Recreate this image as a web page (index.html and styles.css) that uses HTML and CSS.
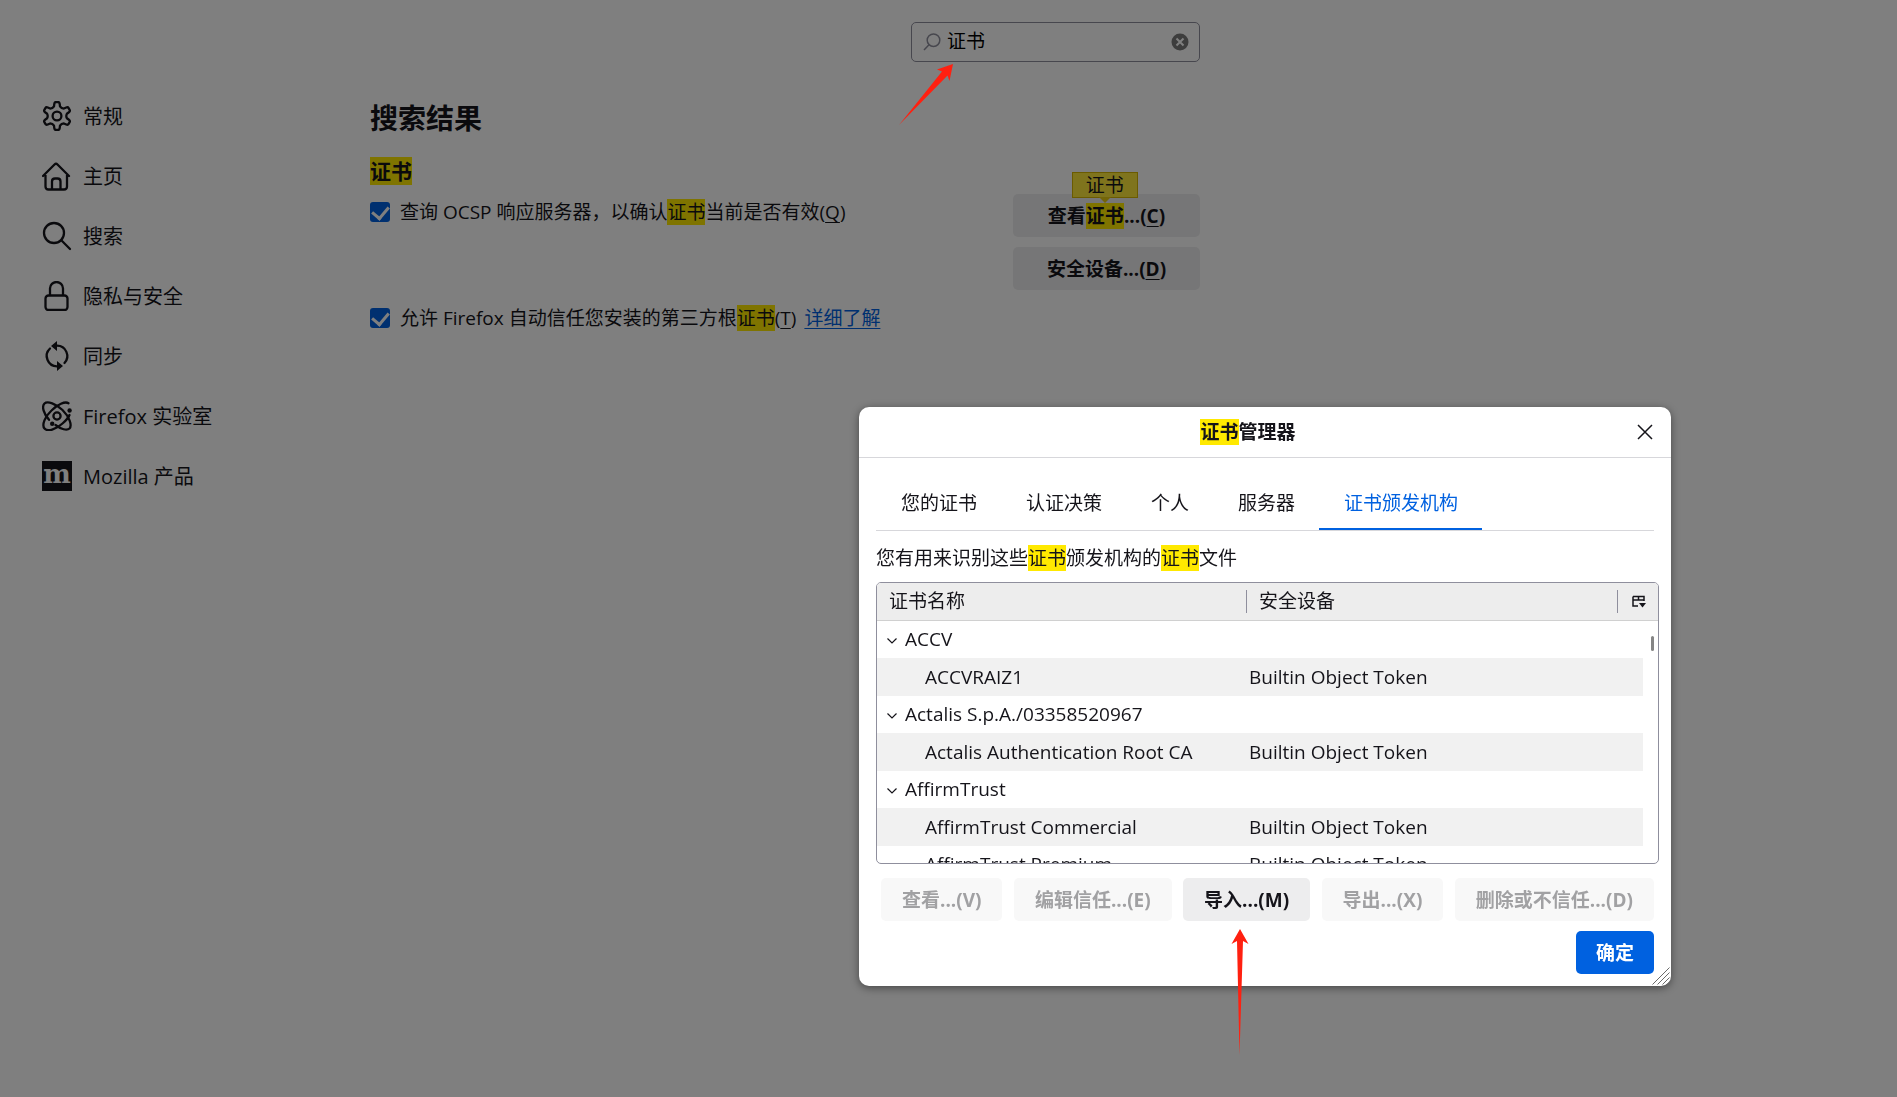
FILE: index.html
```html
<!DOCTYPE html>
<html lang="zh-CN">
<head>
    <meta charset="UTF-8">
    <meta name="viewport" content="width=device-width, initial-scale=1.0">
    <title>设置</title>
    <link rel="stylesheet" href="styles.css">
</head>
<body>

<div class="page">
    <nav class="sidebar">
        <a href="#general">
            <svg class="icon" viewBox="-15 -15 30 30"><path d="M-3-9.7L-2.7-12.2Q-2.5-14-1-14L1-14Q2.5-14 2.7-12.2L3-9.7Q4.35-7.55 6.9-7.45L9.22-8.44Q10.87-9.17 11.62-7.87L12.62-6.13Q13.37-4.83 11.92-3.76L9.9-2.25Q8.72 0 9.9 2.25L11.92 3.76Q13.37 4.83 12.62 6.13L11.62 7.87Q10.87 9.17 9.22 8.44L6.9 7.45Q4.35 7.55 3 9.7L2.7 12.2Q2.5 14 1 14L-1 14Q-2.5 14-2.7 12.2L-3 9.7Q-4.35 7.55-6.9 7.45L-9.22 8.44Q-10.87 9.17-11.62 7.87L-12.62 6.13Q-13.37 4.83-11.92 3.76L-9.9 2.25Q-8.72 0-9.9-2.25L-11.92-3.76Q-13.37-4.83-12.62-6.13L-11.62-7.87Q-10.87-9.17-9.22-8.44L-6.9-7.45Q-4.35-7.55-3-9.7Z"/><circle r="4.4"/></svg>
            <span>常规</span>
        </a>
        <a href="#home">
            <svg class="icon" viewBox="0 0 30 30"><path d="M1 15L12.500 3.500Q14 2 15.500 3.500L27 15M3.500 14V25.500Q3.500 28.500 6.500 28.500H22Q25 28.500 25 25.500V14M10 28V20.500Q10 17.500 13 17.500H15.500Q18.500 17.500 18.500 20.500V28"/></svg>
            <span>主页</span>
        </a>
        <a href="#search">
            <svg class="icon" viewBox="0 0 30 30"><circle cx="12" cy="12" r="10"/><path d="M19.300 19.300L28 28"/></svg>
            <span>搜索</span>
        </a>
        <a href="#privacy">
            <svg class="icon" viewBox="0 0 30 30"><rect x="3.500" y="14.500" width="22" height="14.500" rx="3"/><path d="M8 14V7.500A6.500 6.500 0 0 1 21 7.500V14"/></svg>
            <span>隐私与安全</span>
        </a>
        <a href="#sync">
            <svg class="icon" viewBox="-15 -15 30 30"><path d="M-7-7.500A10.300 10.300 0 0 0 0 10.300M0-10.300A10.300 10.300 0 0 1 7.500 7"/><path class="solid" d="M0 5L6 10L0 15ZM0-15L-6-10L0-5Z"/></svg>
            <span>同步</span>
        </a>
        <a href="#experimental">
            <svg class="icon" viewBox="-15 -15 30 30"><path d="M12.500-1C11.500 1.500 9 4.500 5.500 7.500C-1 13.500-9.500 16-12.500 12.500C-15.500 9-12 0.500-5.500-5.500C0.500-11.500 8-15 11.500-12.800"/><path d="M-8 3.800C-13.500-2.500-15.500-9.500-12.500-12.500C-9.500-15.500-1-12 5.500-6C12 0.500 15.500 9 12.500 12.500C10 15 4 13.200-1.500 9"/><circle r="3.600"/><circle class="solid" cx="12.600" cy="-5.500" r="2.200"/><circle class="solid" cx="-4.800" cy="7.800" r="2.200"/></svg>
            <span>Firefox 实验室</span>
        </a>
        <a href="#more">
            <svg class="mozilla" viewBox="0 0 30 30"><rect width="30" height="30"/><text x="15" y="22" text-anchor="middle">m</text></svg>
            <span>Mozilla 产品</span>
        </a>
    </nav>

    <main class="content">
        <label class="search">
            <svg viewBox="0 0 18 18"><circle cx="10.500" cy="7.200" r="6.300"/><path d="M6 11.700L1 17"/></svg>
            <input type="text" value="证书" aria-label="在设置中查找">
            <button class="clear" aria-label="清除">
                <svg viewBox="0 0 18 18"><circle cx="9" cy="9" r="8.500"/><path d="M5.500 5.500L12.500 12.500M12.500 5.500L5.500 12.500"/></svg>
            </button>
        </label>

        <h1>搜索结果</h1>
        <h2><mark>证书</mark></h2>

        <div class="group">
            <div class="options">
                <div class="option">
                    <input type="checkbox" id="ocsp" checked>
                    <label for="ocsp">查询 OCSP 响应服务器，以确认<mark>证书</mark>当前是否有效(<u>Q</u>)</label>
                </div>
                <div class="option">
                    <input type="checkbox" id="thirdparty" checked>
                    <label for="thirdparty">允许 Firefox 自动信任您安装的第三方根<mark>证书</mark>(<u>T</u>)</label>
                    <a href="#learn">详细了解</a>
                </div>
            </div>
            <div class="actions">
                <button class="btn">查看<mark>证书<span class="tip">证书</span></mark>...(<u>C</u>)</button>
                <button class="btn">安全设备...(<u>D</u>)</button>
            </div>
        </div>
    </main>
</div>

<div class="overlay"></div>

<div class="dialog" role="dialog" aria-labelledby="dialogTitle">
    <div class="title-bar">
        <div class="title" id="dialogTitle"><mark>证书</mark>管理器</div>
        <button class="close" aria-label="关闭">
            <svg viewBox="0 0 16 16"><path d="M1 1L15 15M15 1L1 15"/></svg>
        </button>
    </div>

    <div class="dialog-body">
        <div class="tabs" role="tablist">
            <button role="tab">您的证书</button>
            <button role="tab">认证决策</button>
            <button role="tab">个人</button>
            <button role="tab">服务器</button>
            <button role="tab" class="selected">证书颁发机构</button>
        </div>

        <p class="description">您有用来识别这些<mark>证书</mark>颁发机构的<mark>证书</mark>文件</p>

        <div class="tree">
            <table class="tree-head">
                <tr>
                    <th class="name"><span>证书名称</span></th>
                    <th><span>安全设备</span></th>
                    <th class="picker">
                        <button aria-label="选择要显示的列">
                            <svg viewBox="0 0 14 14"><path d="M1 2.500H12V7M1 2.500V12H6M1 6H12M6.500 2.500V6"/><path class="solid" d="M7 9H14L10.500 13.500Z"/></svg>
                        </button>
                    </th>
                </tr>
            </table>
            <div class="tree-body">
                <table>
                    <tr class="parent"><td class="name"><svg viewBox="0 0 10 6"><path d="M0.500 0.500L5 5L9.500 0.500"/></svg>ACCV</td><td></td></tr>
                    <tr class="child"><td class="name">ACCVRAIZ1</td><td>Builtin Object Token</td></tr>
                    <tr class="parent"><td class="name"><svg viewBox="0 0 10 6"><path d="M0.500 0.500L5 5L9.500 0.500"/></svg>Actalis S.p.A./03358520967</td><td></td></tr>
                    <tr class="child"><td class="name">Actalis Authentication Root CA</td><td>Builtin Object Token</td></tr>
                    <tr class="parent"><td class="name"><svg viewBox="0 0 10 6"><path d="M0.500 0.500L5 5L9.500 0.500"/></svg>AffirmTrust</td><td></td></tr>
                    <tr class="child"><td class="name">AffirmTrust Commercial</td><td>Builtin Object Token</td></tr>
                    <tr class="child even"><td class="name">AffirmTrust Premium</td><td>Builtin Object Token</td></tr>
                </table>
                <div class="thumb"></div>
            </div>
        </div>

        <div class="buttons">
            <button class="btn" disabled>查看...(V)</button>
            <button class="btn" disabled>编辑信任...(E)</button>
            <button class="btn">导入...(M)</button>
            <button class="btn" disabled>导出...(X)</button>
            <button class="btn" disabled>删除或不信任...(D)</button>
        </div>
        <div class="buttons end">
            <button class="btn primary">确定</button>
        </div>
    </div>
    <svg class="grip" viewBox="0 0 18 18"><path d="M0.500 17.500L17.500 0.500M5.500 17.500L17.500 5.500M10.500 17.500L17.500 10.500M15 17.500L17.500 15"/></svg>
</div>

<!-- arrows -->
<svg class="arrow arrow-search" viewBox="0 0 56 62"><path d="M54 0L50.500 17L48.500 11.500L0 61L43 7.500L38 5.500Z"/></svg>
<svg class="arrow arrow-import" viewBox="0 0 18 126"><path d="M9 0L17.500 15L12 12L8.500 126L6 12L0.500 15Z"/></svg>

</body>
</html>
```
FILE: styles.css
```css
* {
    box-sizing: border-box;
}
body {
    margin: 0;
    min-height: 100vh;
    background: #fff;
    color: #15141a;
    font-family: "Open Sans", "Noto Sans CJK SC", sans-serif;
    font-size: 19px;
    line-height: 26px;
    overflow: hidden;
}
button, input {
    font: inherit;
    color: inherit;
}
button {
    border: none;
    background: none;
    padding: 0;
}
svg {
    display: block;
    fill: none;
    stroke: currentColor;
}
.solid {
    fill: currentColor;
    stroke: none;
}
mark {
    background: #ffe900;
    color: inherit;
}
u {
    text-underline-offset: 3px;
}

/* page */
.page {
    display: flex;
}
.sidebar {
    width: 370px;
    padding: 86px 0 0 42px;
    font-size: 20px;
}
.sidebar a {
    display: flex;
    align-items: center;
    gap: 11px;
    height: 60px;
    color: inherit;
    text-decoration: none;
}
.sidebar span {
    padding-top: 1px;
}
.icon, .mozilla {
    width: 30px;
    height: 30px;
    stroke-width: 2.3;
    stroke-linecap: round;
    stroke-linejoin: round;
}
.mozilla {
    fill: #15141a;
    stroke: none;
}
.mozilla text {
    fill: #fff;
    font: bold 26px "DejaVu Serif", serif;
}
.content {
    width: 830px;
    padding-top: 22px;
}
.search {
    display: flex;
    align-items: center;
    width: 289px;
    height: 40px;
    margin-left: auto;
    padding: 0 10px 0 11px;
    border: 1px solid #8f8f9d;
    border-radius: 5px;
}
.search svg {
    width: 18px;
    height: 18px;
    stroke: #8f8f9d;
    stroke-width: 1.5;
}
.search input {
    flex: 1;
    min-width: 0;
    border: none;
    outline: none;
    padding: 0 6px 2px;
    background: none;
    color: #000;
}
.clear circle {
    fill: #7a7a7a;
    stroke: none;
}
.search .clear path {
    stroke: #fff;
    stroke-width: 2;
}
h1 {
    margin: 36px 0 0;
    font-size: 28px;
    line-height: 40px;
}
h2 {
    margin: 18px 0 0;
    font-size: 21px;
    line-height: 30px;
}
.group {
    display: flex;
    justify-content: space-between;
    padding-top: 8px;
}
.options {
    display: flex;
    flex-direction: column;
    gap: 80px;
    padding-top: 5px;
}
.option {
    display: flex;
    align-items: center;
}
.option input {
    appearance: none;
    display: grid;
    place-content: center;
    width: 20px;
    height: 20px;
    margin: 0 10px 0 0;
    border-radius: 3px;
    background: #0061e0;
}
.option input:checked::before {
    content: "";
    width: 8px;
    height: 13px;
    margin-bottom: 3px;
    border: solid #fff;
    border-width: 0 3px 3px 0;
    transform: rotate(40deg);
}
.option a {
    margin-left: 8px;
    color: #0061e0;
    text-underline-offset: 3px;
}
.actions {
    display: flex;
    flex-direction: column;
    gap: 10px;
    width: 187px;
}
.btn {
    height: 43px;
    padding: 0 21px;
    border-radius: 5px;
    background: #ededee;
    font-weight: bold;
    white-space: nowrap;
}
.btn:disabled {
    background: #f8f8f8;
    color: #a1a1a3;
}
.btn mark {
    position: relative;
}
.tip {
    position: absolute;
    left: 50%;
    bottom: 31px;
    width: 66px;
    margin-left: -33px;
    border: 1px solid #d7b600;
    background: #ffe93a;
    line-height: 24px;
    font-weight: normal;
    text-align: center;
}
.tip::after {
    content: "";
    position: absolute;
    left: 26px;
    top: 24px;
    border: 6px solid transparent;
    border-top-color: #e8cd10;
}

/* dialog */
.overlay {
    position: fixed;
    inset: 0;
    background: rgba(0, 0, 0, 0.5);
}
.dialog {
    position: absolute;
    top: 407px;
    right: 226px;
    width: 812px;
    border-radius: 10px;
    background: #fff;
    box-shadow: 0 2px 8px rgba(0, 0, 0, 0.45);
}
.title-bar {
    display: flex;
    align-items: center;
    height: 51px;
    padding: 0 18px;
    border-bottom: 1px solid #d7d7db;
}
.title {
    flex: 1;
    padding-right: 18px;
    text-align: center;
    font-weight: bold;
}
.close svg {
    width: 16px;
    height: 16px;
    stroke-width: 1.5;
}
.dialog-body {
    padding: 17px 12px 12px 17px;
}
.tabs {
    display: flex;
    margin-right: 5px;
    border-bottom: 1px solid #d7d7db;
}
.tabs button {
    height: 55px;
    padding: 2px 24px 0 25px;
    border-bottom: 2px solid transparent;
}
.tabs .selected {
    color: #0061e0;
    border-color: #0061e0;
}
.description {
    margin: 14px 0 11px;
}
.tree {
    border: 1px solid #8f8f9d;
    border-radius: 5px;
    overflow: hidden;
}
table {
    width: 100%;
    border-collapse: collapse;
    table-layout: fixed;
}
th, td {
    padding: 0;
    text-align: left;
    font-weight: normal;
    white-space: nowrap;
}
.name {
    width: 370px;
}
.tree-head {
    background: #ededed;
    border-bottom: 1px solid #d0d0d0;
}
.tree-head th {
    height: 37px;
}
.tree-head span {
    display: block;
    padding-left: 12px;
    border-right: 1px solid #8f8f9d;
    line-height: 23px;
}
.picker {
    width: 40px;
}
.picker svg {
    width: 14px;
    height: 14px;
    margin-left: 14px;
    stroke-width: 1.5;
}
.tree-body {
    position: relative;
    height: 242px;
    padding-right: 15px;
    overflow: hidden;
}
.tree-body td + td {
    padding-left: 2px;
}
.parent td {
    height: 37px;
}
.parent svg {
    display: inline-block;
    width: 10px;
    height: 6px;
    margin: 0 8px 2px 10px;
    stroke-width: 1.2;
}
.child td {
    height: 38px;
    background: #f1f1f1;
}
.child .name {
    padding-left: 48px;
}
.even td {
    height: 37px;
    background: none;
}
.thumb {
    position: absolute;
    top: 15px;
    right: 4px;
    width: 3px;
    height: 15px;
    border-radius: 2px;
    background: #858585;
}
.buttons {
    display: flex;
    justify-content: space-between;
    padding: 14px 5px 0;
}
.buttons .btn {
    padding-top: 2px;
}
.buttons.end {
    justify-content: flex-end;
    padding-top: 10px;
}
.btn.primary {
    padding: 2px 20px 0;
    background: #0061e0;
    color: #fff;
}
.grip {
    position: absolute;
    right: 1px;
    bottom: 1px;
    width: 18px;
    height: 18px;
    color: #6b6b6b;
}

.arrow {
    position: absolute;
    fill: #ff2010;
    stroke: none;
}
.arrow-search {
    left: 899px;
    top: 64px;
    width: 56px;
    height: 62px;
}
.arrow-import {
    left: 1231px;
    top: 929px;
    width: 18px;
    height: 126px;
}
```
